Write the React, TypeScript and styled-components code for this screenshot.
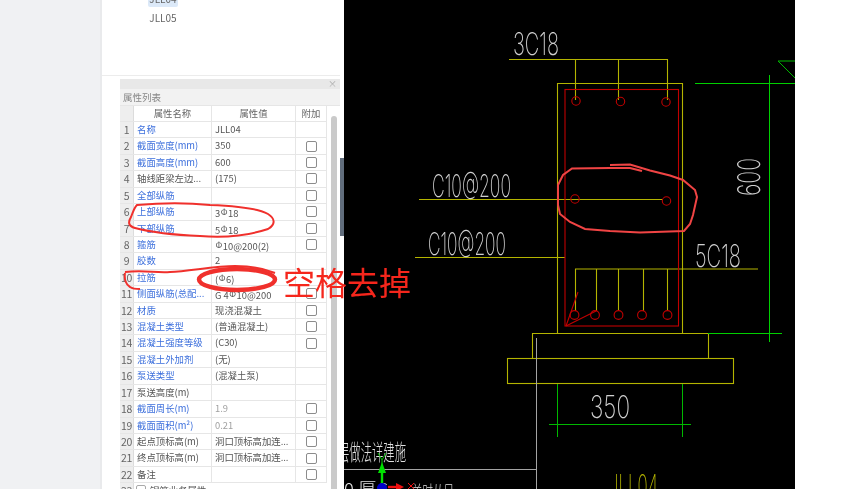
import * as React from 'react';
import styled, { createGlobalStyle } from 'styled-components';

const GlobalStyles = createGlobalStyle`
  html, body {
    margin: 0;
    padding: 0;
    background: #fff;
    font-family: "Noto Sans CJK SC", "Noto Sans", sans-serif;
  }
`;

/* the reference is a soft, rescaled screenshot */
const Page = styled.div`
  position: relative;
  display: flex;
  width: 841px;
  height: 489px;
  overflow: hidden;
  background: #fff;
  filter: blur(0.35px);
`;

const Sidebar = styled.div`
  width: 100px;
  background: #f0f1f3;
  border-right: 2px solid #e9eaec;
`;

const Panel = styled.div`
  width: 238px;
  display: flex;
  flex-direction: column;
  background: #fff;
`;

const TreeList = styled.div`
  height: 76px;
  box-sizing: border-box;
  padding: 0 0 0 46px;
  border-bottom: 1px solid #ececec;
  overflow: hidden;
  flex: none;
`;

const TreeItem = styled.div<{ $selected?: boolean }>`
  width: 30px;
  height: 16px;
  margin-bottom: 3px;
  text-align: center;
  font-size: 10px;
  line-height: 16px;
  color: #666;
  border-radius: 2px;
  background: ${(p) => (p.$selected ? '#dce9f8' : 'transparent')};

  &:first-child {
    margin-top: -9px;
  }
`;

const PropertyPane = styled.div`
  flex: 1;
  margin: 3px 0 0 18px;
  min-height: 0;
  display: flex;
  flex-direction: column;
`;

const PaneStrip = styled.div`
  height: 10px;
  flex: none;
  background: #e8e8e8;
  display: flex;
  justify-content: flex-end;
  align-items: center;
  padding-right: 3px;
  color: #aaa;
  font-size: 9px;
  line-height: 10px;
`;

const PaneTitle = styled.div`
  height: 17px;
  flex: none;
  box-sizing: border-box;
  padding-left: 3px;
  background: #f2f2f2;
  border-bottom: 1px solid #e6e6e6;
  color: #888;
  font-size: 9.5px;
  line-height: 16px;
`;

const TableArea = styled.div`
  flex: 1;
  display: flex;
  min-height: 0;
  overflow: hidden;
`;

const Table = styled.div`
  width: 207px;
  flex: none;
`;

const Track = styled.div`
  flex: 1;
  padding: 10px 3px 0 4px;
`;

const Thumb = styled.div`
  width: 6px;
  height: 400px;
  border-radius: 3px;
  background: #cacaca;
`;

const Row = styled.div<{ $head?: boolean }>`
  display: grid;
  grid-template-columns: 14px 78px 84px 31px;
  height: ${(p) => (p.$head ? '16px' : '16.43px')};
  box-sizing: border-box;
  border-bottom: 1px solid #e6e6e6;
  font-size: 9.4px;
  line-height: 15px;
`;

const IndexCell = styled.div`
  background: #eeeeee;
  border-right: 1px solid #dcdcdc;
  color: #666;
  font-size: 10.5px;
  text-align: center;
  white-space: nowrap;
  letter-spacing: -0.3px;
`;

const NameCell = styled.div<{ $blue?: boolean }>`
  padding-left: 3px;
  border-right: 1px solid #e6e6e6;
  color: ${(p) => (p.$blue ? '#3c6fdc' : '#555')};
  white-space: nowrap;
  overflow: hidden;
`;

const ValueCell = styled.div<{ $muted?: boolean }>`
  padding-left: 3px;
  border-right: 1px solid #e6e6e6;
  color: ${(p) => (p.$muted ? '#a0a0a0' : '#555')};
  white-space: nowrap;
  overflow: hidden;
`;

const HeadCell = styled.div`
  border-right: 1px solid #e6e6e6;
  color: #666;
  text-align: center;
`;

const AddCell = styled.div`
  display: flex;
  align-items: center;
  justify-content: center;
  border-right: 1px solid #e6e6e6;
`;

const Check = styled.span`
  width: 9px;
  height: 9px;
  border: 1px solid #8c8c8c;
  border-radius: 2px;
  background: #fff;
`;

const GroupRow = styled.div`
  grid-column: 2 / 5;
  display: flex;
  gap: 4px;
  padding-left: 2px;
  color: #555;
`;

const Expander = styled.span`
  width: 8px;
  height: 8px;
  margin-top: 2px;
  border: 1px solid #aaa;
  border-radius: 2px;
`;

const Rebar = styled.span`
  font-size: 8.5px;
  vertical-align: 2px;
  margin: 0 0.5px;
`;

const Splitter = styled.div`
  width: 4px;
  flex: none;
  padding-top: 158px;
  background: #fff;
`;

const SplitHandle = styled.div`
  width: 3.5px;
  height: 78px;
  background: #616d7c;
`;

const Canvas = styled.div`
  width: 451px;
  height: 489px;
  flex: none;
  background: #000;
`;

const Drawing = styled.svg`
  display: block;
`;

const CadText = styled.text`
  font-family: "Inter", "Liberation Sans", sans-serif;
  font-weight: 200;
  fill: #cfcfcf;
`;

const CadNote = styled.text`
  font-family: "Noto Sans CJK SC", sans-serif;
  font-weight: 300;
  fill: #e0e0e0;
`;

const Annotations = styled.svg`
  position: absolute;
  left: 0;
  top: 0;
  pointer-events: none;
`;

const RedNote = styled.div`
  position: absolute;
  left: 283px;
  top: 259px;
  font-family: "Noto Sans CJK SC", sans-serif;
  font-weight: 400;
  font-size: 32px;
  line-height: 44px;
  color: #f5261c;
  white-space: nowrap;
`;

type Prop = {
  name: string;
  value?: React.ReactNode;
  blue?: boolean;
  check?: boolean;
  muted?: boolean;
};

const S = () => <Rebar>Φ</Rebar>;

const rows: Prop[] = [
  { name: '名称', value: 'JLL04', blue: true },
  { name: '截面宽度(mm)', value: '350', blue: true, check: true },
  { name: '截面高度(mm)', value: '600', blue: true, check: true },
  { name: '轴线距梁左边...', value: '(175)', check: true },
  { name: '全部纵筋', blue: true, check: true },
  { name: '上部纵筋', value: <>3<S />18</>, blue: true, check: true },
  { name: '下部纵筋', value: <>5<S />18</>, blue: true, check: true },
  { name: '箍筋', value: <><S />10@200(2)</>, blue: true, check: true },
  { name: '胶数', value: '2', blue: true },
  { name: '拉筋', value: <>(<S />6)</>, blue: true },
  { name: '侧面纵筋(总配...', value: <>G 4<S />10@200</>, blue: true, check: true },
  { name: '材质', value: '现浇混凝土', blue: true, check: true },
  { name: '混凝土类型', value: '(普通混凝土)', blue: true, check: true },
  { name: '混凝土强度等级', value: '(C30)', blue: true, check: true },
  { name: '混凝土外加剂', value: '(无)', blue: true },
  { name: '泵送类型', value: '(混凝土泵)', blue: true },
  { name: '泵送高度(m)' },
  { name: '截面周长(m)', value: '1.9', blue: true, check: true, muted: true },
  { name: '截面面积(m²)', value: '0.21', blue: true, check: true, muted: true },
  { name: '起点顶标高(m)', value: '洞口顶标高加连...', check: true },
  { name: '终点顶标高(m)', value: '洞口顶标高加连...', check: true },
  { name: '备注', check: true },
];

const YELLOW = '#b4b400';
const RED = '#c00000';
const GREEN = '#00b800';
const BRIGHT_GREEN = '#00d000';

const topBars = [575, 618, 667];
const topCircles: [number, number][] = [[576, 101], [620.5, 101.5], [666, 102], [575, 199], [666.5, 201]];
const lowerBars = [575, 596, 618, 643, 667];
const lowerCircles = [574.5, 595, 618.5, 642, 667.5];

const CadDrawing = () => (
  <Drawing width={451} height={489} viewBox="344 0 451 489">
    <g fill="none" stroke={YELLOW} strokeWidth={1.1}>
      <path d="M509 59.5H667.5V100" />
      {topBars.slice(0, 2).map((x) => (
        <path key={x} d={`M${x}.5 59.5V100`} />
      ))}
      <path d="M557.5 333V83.5H682.5V333" />
      <path d="M419 199.5H663" />
      <path d="M415 257.5H565" />
      <path d="M575 269H758" />
      {lowerBars.map((x) => (
        <path key={x} d={`M${x}.5 269V311`} />
      ))}
      <path d="M532.5 358V333.5H708.5V358" />
      <rect x={507.5} y={358.5} width={226} height={25} />
    </g>
    <g fill="none" stroke={RED} strokeWidth={1.1}>
      <rect x={565} y={89.5} width={113.5} height={236.5} />
      {topCircles.map(([x, y]) => (
        <circle key={`${x}-${y}`} cx={x} cy={y} r={4.2} />
      ))}
      {lowerCircles.map((x) => (
        <circle key={x} cx={x} cy={315} r={4.4} />
      ))}
      <path d="M566 326L578 292M566 326L596 311" />
    </g>
    <g fill="none" stroke={GREEN} strokeWidth={1}>
      <path d="M557.5 384V437M682.5 384V437M549 424.5H691" />
      <path d="M795 61H778L795 78" />
    </g>
    <g fill="none" stroke={BRIGHT_GREEN} strokeWidth={1}>
      <path d="M769.5 75V342M695 83.5H795M708 333.5H782" />
    </g>
    <path d="M536.5 338V489M344 469.5H536" fill="none" stroke="#a4a4a4" strokeWidth={1} />
    <CadText x={513} y={55} fontSize={31} textLength={46} lengthAdjust="spacingAndGlyphs">3C18</CadText>
    <CadText x={432} y={197} fontSize={31} textLength={79} lengthAdjust="spacingAndGlyphs">C10@200</CadText>
    <CadText x={428} y={254.5} fontSize={31} textLength={78} lengthAdjust="spacingAndGlyphs">C10@200</CadText>
    <CadText x={695} y={266.5} fontSize={31} textLength={46} lengthAdjust="spacingAndGlyphs">5C18</CadText>
    <CadText x={590} y={417.5} fontSize={31} textLength={40} lengthAdjust="spacingAndGlyphs">350</CadText>
    <CadText
      transform="translate(760 196) rotate(-90)"
      fontSize={31}
      textLength={38}
      lengthAdjust="spacingAndGlyphs"
    >
      600
    </CadText>
    <CadText x={609} y={497} fontSize={31} textLength={49} lengthAdjust="spacingAndGlyphs" style={{ fill: '#b4b400' }}>
      JLL04
    </CadText>
    <CadNote x={338} y={460} fontSize={22} textLength={68} lengthAdjust="spacingAndGlyphs">层做法详建施</CadNote>
    <CadNote x={344} y={496} fontSize={18} textLength={44} lengthAdjust="spacingAndGlyphs">0 厚C</CadNote>
    <CadNote x={412} y={497} fontSize={16} textLength={42} lengthAdjust="spacingAndGlyphs">关时从日</CadNote>
    <path d="M382 485V473" stroke="#00e000" strokeWidth={2.4} />
    <path d="M382 462L386 473H378Z" fill="#00e000" />
    <path d="M378 453L382 460L386 453M382 460V464" fill="none" stroke="#00c000" strokeWidth={1} />
    <path d="M388 487H398" stroke="#f01010" strokeWidth={2.4} />
    <path d="M404 487L396 483V491Z" fill="#f01010" />
    <path d="M408 483L414 489M414 483L408 489" fill="none" stroke="#f01010" strokeWidth={1} />
    <circle cx={382} cy={488} r={5} fill="#0000c8" />
  </Drawing>
);

const RedMarks = () => (
  <Annotations width={841} height={489} viewBox="0 0 841 489" fill="none" stroke="#f0302c">
    <path
      strokeWidth={2}
      d="M137 205C160 203 190 203 210 205C235 206 258 208 268 214C276 219 275 225 268 229C250 235 225 238 200 236C175 235 150 232 135 228C128 226 128 222 131 217C133 212 134 208 137 205Z"
    />
    <path
      strokeWidth={2}
      d="M125 272C145 270 155 273 170 272C190 271 215 266 235 266C250 266 265 269 275 273M125 273C124 279 126 285 130 287C133 289 137 289 140 289"
    />
    <ellipse cx={237} cy={279.5} rx={38} ry={10.5} strokeWidth={4.5} />
    <path
      strokeWidth={2}
      stroke="#f04444"
      d="M610 165L630 164.5L650 170.5L670 175.5L683 180L695 190L697 197L693 215L690 224L684 231L640 232.5L610 231L585 229L570 222L560 214L558 205L558 185L563 175L572 168.5L610 168L630 168L642 171"
    />
  </Annotations>
);

const App: React.FC = () => (
  <>
    <GlobalStyles />
    <Page>
      <Sidebar />
      <Panel>
        <TreeList>
          <TreeItem $selected>JLL04</TreeItem>
          <TreeItem>JLL05</TreeItem>
        </TreeList>
        <PropertyPane>
          <PaneStrip>×</PaneStrip>
          <PaneTitle>属性列表</PaneTitle>
          <TableArea>
            <Table>
              <Row $head>
                <IndexCell />
                <HeadCell>属性名称</HeadCell>
                <HeadCell>属性值</HeadCell>
                <HeadCell>附加</HeadCell>
              </Row>
              {rows.map((r, i) => (
                <Row key={r.name}>
                  <IndexCell>{i + 1}</IndexCell>
                  <NameCell $blue={r.blue}>{r.name}</NameCell>
                  <ValueCell $muted={r.muted}>{r.value}</ValueCell>
                  <AddCell>{r.check && <Check />}</AddCell>
                </Row>
              ))}
              <Row>
                <IndexCell>23</IndexCell>
                <GroupRow>
                  <Expander />
                  钢筋业务属性
                </GroupRow>
              </Row>
            </Table>
            <Track>
              <Thumb />
            </Track>
          </TableArea>
        </PropertyPane>
      </Panel>
      <Splitter>
        <SplitHandle />
      </Splitter>
      <Canvas>
        <CadDrawing />
      </Canvas>
      <RedMarks />
      <RedNote>空格去掉</RedNote>
    </Page>
  </>
);

export default App;
